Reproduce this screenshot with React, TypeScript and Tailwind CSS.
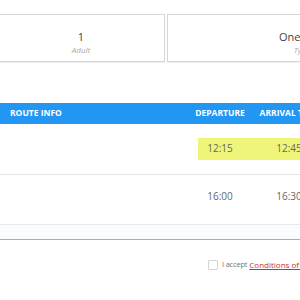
export default function App() {
  return (
    <div className="relative h-[300px] w-[300px] overflow-hidden bg-white font-['Open_Sans',sans-serif]">
      <div className="w-[520px]">
        {/* Passenger / trip cards */}
        <div className="ml-[-3px] flex gap-[2px] pt-[14px]">
          <div className="flex h-[48px] w-[168px] flex-col items-center justify-center border border-[#d6d6d6] pt-[9px] shadow-[0_1px_1px_rgba(0,0,0,0.06)]">
            <span className="text-[11px] leading-[14px] text-[#444]">1</span>
            <span className="text-[8px] italic leading-[12px] text-[#aaa]">Adult</span>
          </div>
          <div className="flex h-[48px] w-[270px] flex-col items-center justify-center border border-[#d6d6d6] pt-[9px] shadow-[0_1px_1px_rgba(0,0,0,0.06)]">
            <span className="text-[11px] leading-[14px] text-[#444]">One Way</span>
            <span className="text-[8px] italic leading-[12px] text-[#aaa]">Type</span>
          </div>
        </div>

        {/* Routes table */}
        <div className="mt-[41px]">
          <div className="flex h-[21px] items-center bg-[#2196f3] text-[8.5px] font-bold text-white">
            <div className="w-[188px] pl-[10px]">ROUTE INFO</div>
            <div className="w-[64px] text-center">DEPARTURE</div>
            <div className="w-[74px] text-center">ARRIVAL TIME</div>
          </div>

          <div className="h-[51px] border-b border-[#e6e6e6] pt-[14px]">
            <div className="flex">
              <div className="w-[198px]" />
              <div className="flex h-[22px] flex-1 items-start bg-[#eef578] pt-[3px] text-[10px] leading-[14px] text-[#666]">
                <div className="w-[44px] text-center">12:15</div>
                <div className="w-[94px] text-center">12:45</div>
              </div>
            </div>
          </div>

          <div className="flex h-[50px] items-start border-b border-[#ece6ee] pt-[14px] text-[10px] leading-[14px] text-[#666]">
            <div className="w-[188px]" />
            <div className="w-[64px] text-center">16:00</div>
            <div className="w-[74px] text-center">16:30</div>
          </div>

          <div className="h-[15px] border-b border-[#8fb9c6] bg-[#fafdfe]" />
        </div>

        {/* Terms */}
        <div className="mt-[19px] flex items-center pl-[208px]">
          <span className="h-[10px] w-[10px] rounded-[1px] border border-[#d4d4d4] bg-white" />
          <span className="ml-[4px] text-[7.5px] tracking-[-0.2px] text-[#777]">I accept</span>
          <span className="ml-[2px] text-[8px] text-[#c9302c] underline">Conditions of Sale</span>
        </div>
      </div>
    </div>
  );
}
